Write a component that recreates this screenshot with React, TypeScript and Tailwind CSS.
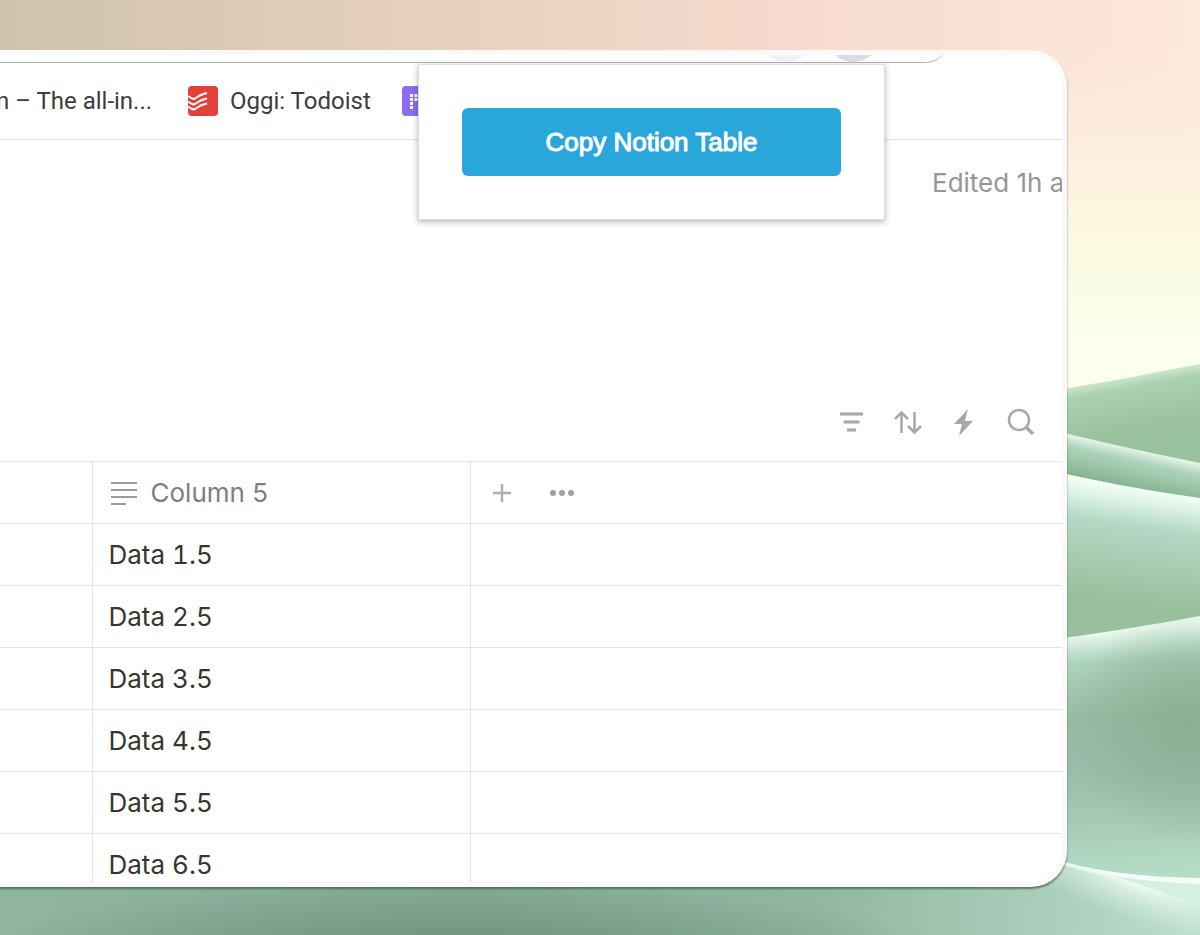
import type { ReactNode } from 'react';

const ROWS = ['Data 1.5', 'Data 2.5', 'Data 3.5', 'Data 4.5', 'Data 5.5', 'Data 6.5'];

export default function App() {
  return (
    <main className="relative min-h-screen overflow-hidden pt-[50px] pb-12 font-[Inter,sans-serif]">
      <Wallpaper />

      {/* Browser window */}
      <div className="relative mr-[133px] rounded-r-[36px] bg-[#fafafb] py-[5px] pr-[5px] shadow-[0_2px_2px_rgba(60,85,70,0.7)]">
        <div className="overflow-hidden rounded-r-[30px] bg-white">
          <AddressBar />
          <BookmarksBar />
          <div className="flex h-[84px] justify-end overflow-hidden">
            <p className="w-[130px] pt-7 text-[26px] leading-[30px] whitespace-nowrap text-[#979694]">Edited 1h ago</p>
          </div>
          <Toolbar />
          <NotionTable />
        </div>

        <div className="absolute top-[14px] right-[182px] w-[467px] border border-[#dcdcdc] bg-white p-[43px] shadow-[0_2px_6px_rgba(0,0,0,0.3)]">
          <button
            type="button"
            className="h-[68px] w-full rounded-md bg-[#2aa7da] font-['Liberation_Sans',sans-serif] text-[26px] text-white [-webkit-text-stroke:1px_white]"
          >
            Copy Notion Table
          </button>
        </div>
      </div>
    </main>
  );
}

function AddressBar() {
  return (
    <div className="flex h-2 items-end overflow-hidden pr-[113px]">
      <div className="flex h-12 w-full items-end justify-end gap-[11px] rounded-r-full border-b border-[#b5b5b5] pr-[68px]">
        <span className="size-14 shrink-0 rounded-full bg-[#f1f1f2]" />
        <span className="size-14 shrink-0 rounded-full bg-[#dcdcdd]" />
      </div>
    </div>
  );
}

function BookmarksBar() {
  return (
    <nav className="flex h-[77px] items-center overflow-hidden border-b border-[#dcdcdc] font-[Roboto,sans-serif] text-2xl whitespace-nowrap text-[#3c3c3e]">
      <a href="#notion" className="-ml-1 w-48">n – The all-in...</a>
      <a href="#todoist" className="flex w-[214px] items-center gap-3">
        <TodoistIcon />
        Oggi: Todoist
      </a>
      <a href="#grid" aria-label="Grid">
        <GridIcon />
      </a>
    </nav>
  );
}

function Toolbar() {
  return (
    <div className="flex h-[237px] items-end justify-end gap-[26px] pr-[27px] pb-6 text-[#a9a8a5]">
      <IconButton label="Filter">
        <path d="M3 7h23M6.500 15h16M10 23h9" strokeWidth="3" />
      </IconButton>
      <IconButton label="Sort">
        <path d="M8.500 26V6M2 12l6.500-6.500L15 12M21.500 5v20M15 19l6.500 6.500L28 19" strokeWidth="2.5" />
      </IconButton>
      <IconButton label="Automations">
        <path d="M19 2L5 17h8l-3 12 14-15h-8z" fill="currentColor" stroke="none" />
      </IconButton>
      <IconButton label="Search">
        <circle cx="14" cy="13" r="10" strokeWidth="2.5" />
        <path d="M21 20l7 7" strokeWidth="3.5" />
      </IconButton>
    </div>
  );
}

function IconButton({ label, children }: { label: string; children: ReactNode }) {
  return (
    <button type="button" aria-label={label}>
      <svg width="30" height="30" viewBox="0 0 30 30" fill="none" stroke="currentColor">
        {children}
      </svg>
    </button>
  );
}

function NotionTable() {
  return (
    <div className="h-[421px] overflow-hidden">
      <table className="w-full table-fixed border-collapse text-left text-[26px]">
        <thead>
          <tr className="h-[62px] border-y border-[#e4e4e3] text-[#7f7e7b]">
            <th className="w-[92px] border-r border-[#e4e4e3]" />
            <th className="w-[378px] border-r border-[#e4e4e3] px-4 font-normal">
              <span className="flex items-center gap-3">
                <svg width="30" height="26" viewBox="0 0 30 26" stroke="currentColor" strokeWidth="2" className="text-[#9b9a97]">
                  <path d="M2 3h26M2 10h26M2 17h26M2 24h15" />
                </svg>
                Column 5
              </span>
            </th>
            <th className="px-4 text-[#b0afad]">
              <span className="flex items-center gap-[30px]">
                <button type="button" aria-label="Add column">
                  <svg width="30" height="30" viewBox="0 0 30 30" stroke="currentColor" strokeWidth="2.5">
                    <path d="M6 15h18M15 6v18" />
                  </svg>
                </button>
                <button type="button" aria-label="More options" className="text-[#a09f9c]">
                  <svg width="30" height="30" viewBox="0 0 30 30" fill="currentColor">
                    <circle cx="6" cy="15" r="3" />
                    <circle cx="15" cy="15" r="3" />
                    <circle cx="24" cy="15" r="3" />
                  </svg>
                </button>
              </span>
            </th>
          </tr>
        </thead>
        <tbody>
          {ROWS.map((row) => (
            <tr key={row} className="h-[62px] border-b border-[#e4e4e3] text-[#37352f]">
              <td className="border-r border-[#e4e4e3]" />
              <td className="border-r border-[#e4e4e3] px-4 tabular-nums">{row}</td>
              <td />
            </tr>
          ))}
        </tbody>
      </table>
    </div>
  );
}

function TodoistIcon() {
  return (
    <svg width="30" height="30" viewBox="0 0 30 30">
      <rect width="30" height="30" rx="4" fill="#e44238" />
      <g fill="none" stroke="#fff" strokeWidth="2">
        <path d="M0 10l4 2.500c1 .5 2 .5 3 0l4-2.500c2-1.500 4-2 8-3" />
        <path d="M0 15.500l4 2.500c1 .5 2 .5 3 0l4-2.500c2-1.500 4-2 8-3" />
        <path d="M0 20.500l4 2.500c1 .5 2 .5 3 0l4-2.500c2-1.500 4-2 8-3" />
      </g>
    </svg>
  );
}

function GridIcon() {
  return (
    <svg width="30" height="30" viewBox="0 0 30 30">
      <rect width="30" height="30" rx="4" fill="#8c6cf2" />
      <path d="M9.500 8v15M14 8v8M18.500 8v8" stroke="#fff" strokeWidth="3" strokeDasharray="3 1" />
    </svg>
  );
}

function Wallpaper() {
  return (
    <svg className="absolute inset-0 size-full" viewBox="0 0 1200 935" preserveAspectRatio="none" aria-hidden="true">
      <defs>
        <linearGradient id="dawn" x1="0" y1="0" x2="1" y2="0">
          <stop offset="0" stopColor="#cfc2ae" />
          <stop offset="0.35" stopColor="#e6d0bf" />
          <stop offset="0.65" stopColor="#f6dacd" />
          <stop offset="1" stopColor="#fde8dc" />
        </linearGradient>
        <linearGradient id="glow" gradientUnits="userSpaceOnUse" x1="0" y1="40" x2="0" y2="350">
          <stop offset="0" stopColor="#fcebdb" stopOpacity="0" />
          <stop offset="0.35" stopColor="#fdeedd" />
          <stop offset="0.7" stopColor="#fbfbe2" />
          <stop offset="1" stopColor="#fbffed" />
        </linearGradient>
        <linearGradient id="hillFar" gradientUnits="userSpaceOnUse" x1="1128" y1="374" x2="1142" y2="450">
          <stop offset="0" stopColor="#d6eccf" />
          <stop offset="0.18" stopColor="#abd2b0" />
          <stop offset="0.7" stopColor="#9ac29f" />
          <stop offset="1" stopColor="#98c19d" />
        </linearGradient>
        <linearGradient id="ridge" gradientUnits="userSpaceOnUse" x1="1134" y1="446" x2="1125" y2="486">
          <stop offset="0" stopColor="#f2fdf5" />
          <stop offset="0.35" stopColor="#aed4bc" />
          <stop offset="1" stopColor="#86b592" />
        </linearGradient>
        <linearGradient id="hillMid" gradientUnits="userSpaceOnUse" x1="1134" y1="486" x2="1118" y2="600">
          <stop offset="0" stopColor="#f5fef8" />
          <stop offset="0.12" stopColor="#e0f4e8" />
          <stop offset="0.35" stopColor="#b3d8c4" />
          <stop offset="1" stopColor="#98c09d" />
        </linearGradient>
        <linearGradient id="hillNear" gradientUnits="userSpaceOnUse" x1="1134" y1="628" x2="1146" y2="875">
          <stop offset="0" stopColor="#f0fdf3" />
          <stop offset="0.13" stopColor="#acd3bb" />
          <stop offset="0.35" stopColor="#95bba2" />
          <stop offset="0.6" stopColor="#99bfab" />
          <stop offset="1" stopColor="#b5dcc6" />
        </linearGradient>
        <radialGradient id="shade" gradientUnits="userSpaceOnUse" cx="1190" cy="725" r="120">
          <stop offset="0" stopColor="#8aaf94" />
          <stop offset="1" stopColor="#8aaf94" stopOpacity="0" />
        </radialGradient>
        <linearGradient id="floor" gradientUnits="userSpaceOnUse" x1="0" y1="850" x2="1180" y2="930">
          <stop offset="0" stopColor="#90b5a1" />
          <stop offset="0.4" stopColor="#84a994" />
          <stop offset="0.7" stopColor="#92b8a3" />
          <stop offset="1" stopColor="#b9dccb" />
        </linearGradient>
        <radialGradient
          id="floorShade"
          gradientUnits="userSpaceOnUse"
          cx="0"
          cy="0"
          r="1"
          gradientTransform="translate(460 950) scale(480 65)"
        >
          <stop offset="0" stopColor="#6c9479" />
          <stop offset="1" stopColor="#6c9479" stopOpacity="0" />
        </radialGradient>
        <radialGradient
          id="crest"
          gradientUnits="userSpaceOnUse"
          cx="0"
          cy="0"
          r="1"
          gradientTransform="translate(1140 882) rotate(20) scale(170 42)"
        >
          <stop offset="0" stopColor="#f2fef7" />
          <stop offset="1" stopColor="#cfeade" stopOpacity="0" />
        </radialGradient>
      </defs>
      <rect width="1200" height="935" fill="url(#dawn)" />
      <rect x="1000" width="200" height="935" fill="url(#glow)" />
      <path d="M1040 393Q1120 380 1200 364V480L1040 428Z" fill="url(#hillFar)" />
      <path d="M1040 427Q1120 447 1200 463V500L1040 472Z" fill="url(#ridge)" />
      <path d="M1040 468Q1120 487 1200 498V640H1040Z" fill="url(#hillMid)" />
      <path d="M1040 641Q1120 631 1200 616V890H1040Z" fill="url(#hillNear)" />
      <path d="M1040 641Q1120 631 1200 616V890H1040Z" fill="url(#shade)" />
      <path d="M0 860H1060Q1120 878 1200 878V935H0Z" fill="url(#floor)" />
      <path d="M0 860H1060V935H0Z" fill="url(#floorShade)" />
      <path d="M1050 858Q1110 877 1200 878V907Q1130 882 1050 862Z" fill="#d6efe3" />
      <path d="M1050 858Q1110 877 1200 878V884Q1110 881 1050 860Z" fill="#f4fef8" />
      <path d="M900 858H1050Q1120 875 1200 907V935H900Z" fill="url(#crest)" />
    </svg>
  );
}
